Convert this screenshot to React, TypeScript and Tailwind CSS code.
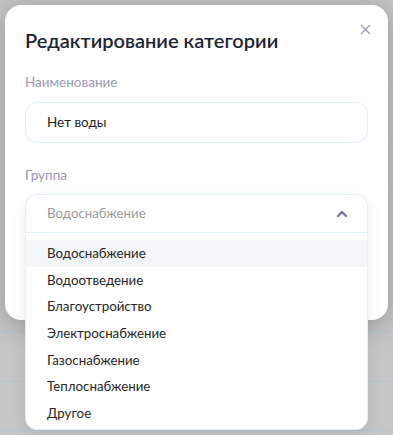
import React from 'react';

const groups = [
  'Водоснабжение',
  'Водоотведение',
  'Благоустройство',
  'Электроснабжение',
  'Газоснабжение',
  'Теплоснабжение',
  'Другое',
];

const App: React.FC = () => {
  const selected = 'Водоснабжение';

  return (
    <div
      className="relative h-[435px] w-[393px] overflow-hidden bg-[#c6c6c6]"
      style={{ fontFamily: 'Lato, "Noto Sans", sans-serif' }}
    >
      {/* table rows behind the overlay */}
      <div className="flex flex-col pt-[38px]">
        {Array.from({ length: 9 }).map((_, i) => (
          <div key={i} className="h-[49px] border-t border-[#b3c6cf]" />
        ))}
      </div>

      {/* modal */}
      <div className="absolute left-[5px] top-[5px] h-[315px] w-[383px] rounded-[16px] bg-white px-5 pt-[21px] shadow-[0_4px_30px_rgba(0,0,0,0.25)]">
        <button className="absolute right-[13px] top-[14px] flex h-5 w-5 items-center justify-center text-[#9c9cbb]">
          <svg width="11" height="11" viewBox="0 0 11 11" fill="none" stroke="currentColor" strokeWidth={1.3}>
            <path d="M1 1l9 9M10 1l-9 9" />
          </svg>
        </button>

        <h2 className="text-[20px] font-semibold leading-[28px] text-[#1e2533]">Редактирование категории</h2>

        <div className="mt-[19px] text-[13.5px] leading-[18px] text-[#9a98b5]">Наименование</div>
        <div className="mt-[11px] flex h-[41px] items-center rounded-[12px] border border-[#def2f7] px-[21px] text-[13.5px] text-[#222222]">
          Нет воды
        </div>

        <div className="mt-[23px] text-[13.5px] leading-[18px] text-[#9a98b5]">Группа</div>

        {/* select + open menu */}
        <div className="relative mt-[10px] w-[343px] rounded-[12px] border border-[#def2f7] bg-white shadow-[0_6px_16px_rgba(0,0,0,0.08)]">
          <div className="flex h-[38px] items-center justify-between border-b border-[#def2f7] pl-[21px] pr-[19px] text-[13.3px] text-[#9b9b9b]">
            <span>{selected}</span>
            <svg width="12" height="8" viewBox="0 0 12 8" fill="none" stroke="#77779a" strokeWidth={2.4} strokeLinecap="round" strokeLinejoin="round">
              <path d="M2 6l4-4 4 4" />
            </svg>
          </div>
          <div className="flex flex-col pb-[3px] pt-[7px]">
            {groups.map((g) => (
              <div
                key={g}
                className={`flex h-[26.6px] items-center pl-[21px] text-[13.3px] leading-[18px] text-[#262626] ${g === selected ? 'bg-[#f3f7fa]' : ''}`}
              >
                {g}
              </div>
            ))}
          </div>
        </div>
      </div>
    </div>
  );
};

export default App;
